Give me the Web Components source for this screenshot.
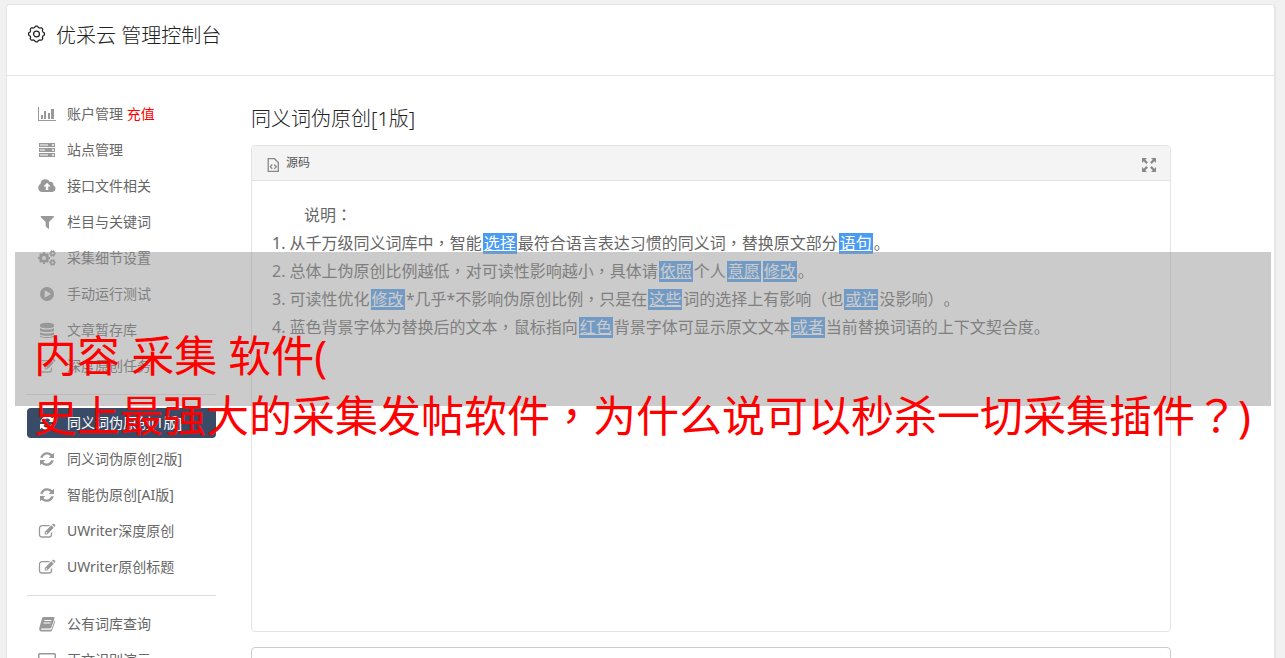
<!DOCTYPE html>
<html lang="zh-CN">
<head>
<meta charset="utf-8">
<title>优采云 管理控制台</title>
<style>
  html { scrollbar-width: none; }
  body {
    margin: 0;
    background: #f1f1f1;
    color: #666;
    font: 14px/20px "Noto Sans", "Noto Sans CJK SC", sans-serif;
    text-spacing-trim: space-all;
  }
  mark {
    display: inline-block;
    margin: 0 1px;
    padding: 0 1px;
    background: #4a9cf2;
    color: #fff;
    line-height: 21px;
    text-decoration: underline;
  }
  /* punctuation centred in its square */
  i { font-family: "Noto Sans CJK TC", sans-serif; font-style: normal; line-height: 1; }
</style>
</head>
<body>
<console-page>
  <span slot="title">优采云 管理控制台</span>

  <nav-menu slot="nav">
    <nav-item icon="chart">账户管理 <em>充值</em></nav-item>
    <nav-item icon="server">站点管理</nav-item>
    <nav-item icon="cloud">接口文件相关</nav-item>
    <nav-item icon="filter">栏目与关键词</nav-item>
    <nav-item icon="cogs">采集细节设置</nav-item>
    <nav-item icon="play">手动运行测试</nav-item>
    <nav-item icon="database">文章暂存库</nav-item>
    <nav-item icon="edit">深度原创任务</nav-item>
    <hr>
    <nav-item icon="refresh" active>同义词伪原创[1版]</nav-item>
    <nav-item icon="refresh">同义词伪原创[2版]</nav-item>
    <nav-item icon="refresh">智能伪原创[AI版]</nav-item>
    <nav-item icon="edit">UWriter深度原创</nav-item>
    <nav-item icon="edit">UWriter原创标题</nav-item>
    <hr>
    <nav-item icon="book">公有词库查询</nav-item>
    <nav-item icon="laptop">正文识别演示</nav-item>
  </nav-menu>

  <h2 slot="heading">同义词伪原创[1版]</h2>
  <rich-editor>
    <p class="lead">说明<i lang="zh-TW">：</i></p>
    <p>1. 从千万级同义词库中<i lang="zh-TW">，</i>智能<mark>选择</mark>最符合语言表达习惯的同义词<i lang="zh-TW">，</i>替换原文部分<mark>语句</mark>。</p>
    <p>2. 总体上伪原创比例越低<i lang="zh-TW">，</i>对可读性影响越小<i lang="zh-TW">，</i>具体请<mark>依照</mark>个人<mark>意愿</mark><mark>修改</mark>。</p>
    <p>3. 可读性优化<mark>修改</mark>*几乎*不影响伪原创比例<i lang="zh-TW">，</i>只是在<mark>这些</mark>词的选择上有影响<i lang="zh-TW">（</i>也<mark>或许</mark>没影响<i lang="zh-TW">）</i>。</p>
    <p>4. 蓝色背景字体为替换后的文本<i lang="zh-TW">，</i>鼠标指向<mark>红色</mark>背景字体可显示原文文本<mark>或者</mark>当前替换词语的上下文契合度。</p>
  </rich-editor>
  <plain-box></plain-box>
</console-page>

<caption-band>
  <span>内容 采集 软件(</span>
  <span>史上最强大的采集发帖软件<i lang="zh-TW">，</i>为什么说可以秒杀一切采集插件<i lang="zh-TW">？</i>)</span>
</caption-band>

<script>
const GEAR = (cx, cy, r, teeth, hole) => {
  // solid cog with square teeth, the hole is cut with evenodd
  let d = "";
  for (let i = 0; i < teeth; i++) {
    const a = (i / teeth) * Math.PI * 2;
    const s = Math.PI / teeth;
    [[-0.85, 0.76], [-0.4, 1], [0.4, 1], [0.85, 0.76]].forEach(([k, m], j) => {
      const x = (cx + Math.cos(a + s * k) * r * m).toFixed(2);
      const y = (cy + Math.sin(a + s * k) * r * m).toFixed(2);
      d += (i || j ? "L" : "M") + x + " " + y;
    });
  }
  return `${d}Z M${cx - hole} ${cy}a${hole} ${hole} 0 1 0 ${hole * 2} 0a${hole} ${hole} 0 1 0 ${-hole * 2} 0Z`;
};

// outline of a wheel with rounded bumps
const SCALLOP = (cx, cy, r, depth, bumps) => {
  let d = "";
  for (let i = 0; i < 96; i++) {
    const a = (i / 96) * Math.PI * 2;
    const m = r + depth * Math.tanh(2 * Math.cos(a * bumps));
    d += (i ? "L" : "M") + (cx + Math.cos(a) * m).toFixed(2) + " " + (cy + Math.sin(a) * m).toFixed(2);
  }
  return d + "Z";
};

const ICONS = {
  chart: `<path d="M1 1h1v13h17v1H1z M4 9h2v4H4z M7 5h2v8H7z M11 7h2v6h-2z M14 3h3v10h-3z"/>`,
  server: `<path fill-rule="evenodd" d="M2 1h16v4H2z M3 2.500v1h8v-1z M15 2.300v1.400h2V2.300z M2 6h16v4H2z M3 7.500v1h5v-1z M15 7.300v1.400h2V7.300z M2 11h16v4H2z M3 12.500v1h8v-1z M15 12.300v1.400h2v-1.400z"/>`,
  cloud: `<path fill-rule="evenodd" d="M5.300 14A4.200 4.200 0 0 1 3.500 6.100 5 5 0 0 1 13 4a2.700 2.700 0 0 1 3.400 3.300A3.500 3.500 0 0 1 15.500 14z M10 4.800 6.500 8.400H8.800V12h2.400V8.400h2.300z"/>`,
  filter: `<path d="M4 2h12.600q.6.500.1 1.200L12 8v6.400q-.4.600-1 .1L8.700 12.300V8L3.900 3.200Q3.400 2.500 4 2z"/>`,
  cogs: `<path fill-rule="evenodd" d="${GEAR(7, 8, 6, 8, 2)} ${GEAR(15.5, 3.5, 3.300, 6, 1.100)} ${GEAR(15.5, 12.5, 3.300, 6, 1.100)}"/>`,
  play: `<path fill-rule="evenodd" d="M10 1a7 7 0 1 0 0 14 7 7 0 0 0 0-14z M7.700 4.200 14 8l-6.300 3.800z"/>`,
  database: `<path d="M3 3c0-3 14-3 14 0v1.300c0 2.600-14 2.600-14 0z M3 6c2 2 12 2 14 0v2.200c0 2.500-14 2.500-14 0z M3 9.900c2 2 12 2 14 0v2c0 2.500-14 2.500-14 0z M3 13.500c2 2 12 2 14 0v.8c0 2.300-14 2.300-14 0z"/>`,
  edit: `<path fill="none" stroke="currentColor" stroke-width="1.300" d="M12.500 2.700H5A2.500 2.500 0 0 0 2.500 5.200v6.300A2.500 2.500 0 0 0 5 14h7a2.500 2.500 0 0 0 2.500-2.500V9.500"/><path fill-rule="evenodd" d="M14.300 2.300l2.500 2.500-6.600 6.700H7.700V9z M8.700 9.400v1.100h1.100l.5-.5-1.100-1.100z M15 1.600l.9-.8q.5-.3 1 0l1.300 1.300q.4.500 0 1l-.8.900z"/>`,
  refresh: `<path d="M3.300 6.700C4.500 1 11.300-.6 15.300 3.200L17 1.700V7h-5.300l1.900-1.900C10.700 2.400 7 3.300 5.800 6.700z M16.700 9.300C15.500 15 8.700 16.600 4.700 12.800L3 14.300V9h5.300l-1.900 1.900c2.900 2.700 6.600 1.800 7.800-1.600z"/>`,
  book: `<path fill-rule="evenodd" d="M6.600 1h10.100q1 .3.700 1.400l-3 9.200q-.4 1-1.500 1H4.300q-.8.700.3 1.200h9q.8-.1 1.100-.8l2.900-8.700q.8.500.5 1.400l-2.800 8.400q-.4 1.300-1.600 1.400H4q-2-.4-1.900-2.700L5 2.300Q5.600 1 6.600 1z M7.500 4l-.3.900h7l.3-.9z M6.700 6.500l-.3.900h7l.3-.9z"/>`,
  laptop: `<path fill-rule="evenodd" d="M2.500 1h15q1.500 0 1.500 1.500V12H1V2.500Q1 1 2.500 1z M2.500 2.500v8h15v-8z M0 13h20v2H0z"/>`,
  gear: `<g fill="none" stroke="currentColor" stroke-width="1.200"><path d="${SCALLOP(10, 8, 7, 0.6, 8)}"/><circle cx="10" cy="8" r="2.800"/></g>`,
  source: `<path fill="none" stroke="currentColor" stroke-width="1.300" d="M5.200 1.700h6.300l3.800 3.800v8.800H5.200z M9.300 7.500 7.300 9.700l2 2.200 M11.300 7.500l2 2.200-2 2.200"/>`,
  expand: `<path d="M3 1h5L6.300 2.700l2.600 2.600-1.600 1.600-2.600-2.600L3 6z M17 1v5l-1.700-1.700-2.600 2.600-1.600-1.600 2.600-2.600L12 1z M3 15v-5l1.700 1.700 2.600-2.600 1.600 1.600-2.600 2.600L8 15z M17 15h-5l1.700-1.700-2.600-2.600 1.600-1.600 2.600 2.600L17 10z"/>`
};

class UiIcon extends HTMLElement {
  connectedCallback() {
    if (!this.shadowRoot) this.attachShadow({ mode: "open" });
    this.shadowRoot.innerHTML = `
      <style>
        :host { display: block; flex: none; width: 20px; height: 16px; }
        svg { display: block; width: 100%; height: 100%; fill: currentColor; overflow: visible; }
      </style>
      <svg viewBox="0 0 20 16" aria-hidden="true">${ICONS[this.getAttribute("name")] || ""}</svg>
    `;
  }
}

class NavItem extends HTMLElement {
  constructor() {
    super();
    this.attachShadow({ mode: "open" });
    this.shadowRoot.innerHTML = `
      <style>
        :host { display: block; }
        a {
          display: flex;
          align-items: center;
          gap: 10px;
          padding: 5px 10px;
          border-radius: 4px;
          color: #666;
          text-decoration: none;
          white-space: nowrap;
        }
        ui-icon { color: #999; }
        :host([active]) a { background: #394b67; color: #fff; }
        :host([active]) ui-icon { color: #fff; }
        ::slotted(em) { color: #f00; font-style: normal; }
      </style>
      <a href="#"><ui-icon name="${this.getAttribute("icon")}"></ui-icon><span><slot></slot></span></a>
    `;
  }
}

class NavMenu extends HTMLElement {
  constructor() {
    super();
    this.attachShadow({ mode: "open" });
    this.shadowRoot.innerHTML = `
      <style>
        :host { display: block; }
        nav { display: flex; flex-direction: column; gap: 6px; }
        ::slotted(hr) {
          width: 100%;
          margin: 7px 0;
          border: 0;
          border-top: 1px solid #ddd;
        }
      </style>
      <nav><slot></slot></nav>
    `;
  }
}

class RichEditor extends HTMLElement {
  constructor() {
    super();
    this.attachShadow({ mode: "open" });
    this.shadowRoot.innerHTML = `
      <style>
        :host {
          display: block;
          border: 1px solid #e3e3e3;
          border-radius: 4px;
          overflow: hidden;
        }
        .toolbar {
          display: flex;
          justify-content: space-between;
          align-items: center;
          height: 34px;
          padding: 0 11px;
          background: #f4f4f4;
          border-bottom: 1px solid #e3e3e3;
        }
        button {
          display: flex;
          align-items: center;
          gap: 3px;
          padding: 0;
          border: 0;
          background: none;
          color: #555;
          font: inherit;
          font-size: 12px;
        }
        ui-icon { color: #888; padding-top: 3px; }
        .content {
          min-height: 410px;
          padding: 20px;
          font-size: 16px;
          line-height: 28px;
        }
        ::slotted(p) { margin: 0; }
        ::slotted(.lead) { text-indent: 2em; }
      </style>
      <div class="toolbar">
        <button type="button"><ui-icon name="source"></ui-icon>源码</button>
        <button type="button" aria-label="全屏"><ui-icon name="expand"></ui-icon></button>
      </div>
      <div class="content"><slot></slot></div>
    `;
  }
}

class PlainBox extends HTMLElement {
  constructor() {
    super();
    this.attachShadow({ mode: "open" });
    this.shadowRoot.innerHTML = `
      <style>
        :host { display: block; margin-top: 15px; }
        textarea {
          display: block;
          box-sizing: border-box;
          width: 100%;
          height: 80px;
          border: 1px solid #ccc;
          border-radius: 4px;
          resize: none;
        }
      </style>
      <textarea aria-label="原文"></textarea>
    `;
  }
}

class ConsolePage extends HTMLElement {
  constructor() {
    super();
    this.attachShadow({ mode: "open" });
    this.shadowRoot.innerHTML = `
      <style>
        :host {
          display: block;
          margin: 4px 9px 0 6px;
          border: 1px solid #e5e5e5;
          border-right-width: 2px;
          border-radius: 4px;
          background: #fff;
        }
        header {
          display: flex;
          align-items: flex-start;
          gap: 9px;
          padding: 15px 19px 23px;
          border-bottom: 1px solid #e5e5e5;
          color: #222;
        }
        header ui-icon { width: 21px; height: 18px; padding-top: 5px; }
        h1 { margin: 0; font-size: 20px; line-height: 32px; font-weight: 300; }
        .body {
          display: grid;
          grid-template-columns: 189px minmax(0, 1fr);
          gap: 35px;
          padding: 23px 103px 20px 20px;
        }
        ::slotted(h2) {
          margin: 0 0 6px;
          color: #222;
          font-size: 20px;
          line-height: 40px;
          font-weight: 300;
        }
      </style>
      <header><ui-icon name="gear"></ui-icon><h1><slot name="title"></slot></h1></header>
      <div class="body">
        <aside><slot name="nav"></slot></aside>
        <main><slot name="heading"></slot><slot></slot></main>
      </div>
    `;
  }
}

class CaptionBand extends HTMLElement {
  constructor() {
    super();
    this.attachShadow({ mode: "open" });
    this.shadowRoot.innerHTML = `
      <style>
        :host {
          position: absolute;
          top: 252px;
          left: 15px;
          right: 14px;
          box-sizing: border-box;
          height: 154px;
          padding: 74px 0 0 19px;
          background: rgba(151, 151, 151, 0.5);
          color: #f00;
          font-size: 43px;
          line-height: 60px;
          white-space: nowrap;
          pointer-events: none;
        }
        ::slotted(span) { display: block; }
      </style>
      <slot></slot>
    `;
  }
}

customElements.define("ui-icon", UiIcon);
customElements.define("nav-item", NavItem);
customElements.define("nav-menu", NavMenu);
customElements.define("rich-editor", RichEditor);
customElements.define("plain-box", PlainBox);
customElements.define("console-page", ConsolePage);
customElements.define("caption-band", CaptionBand);
</script>
</body>
</html>
